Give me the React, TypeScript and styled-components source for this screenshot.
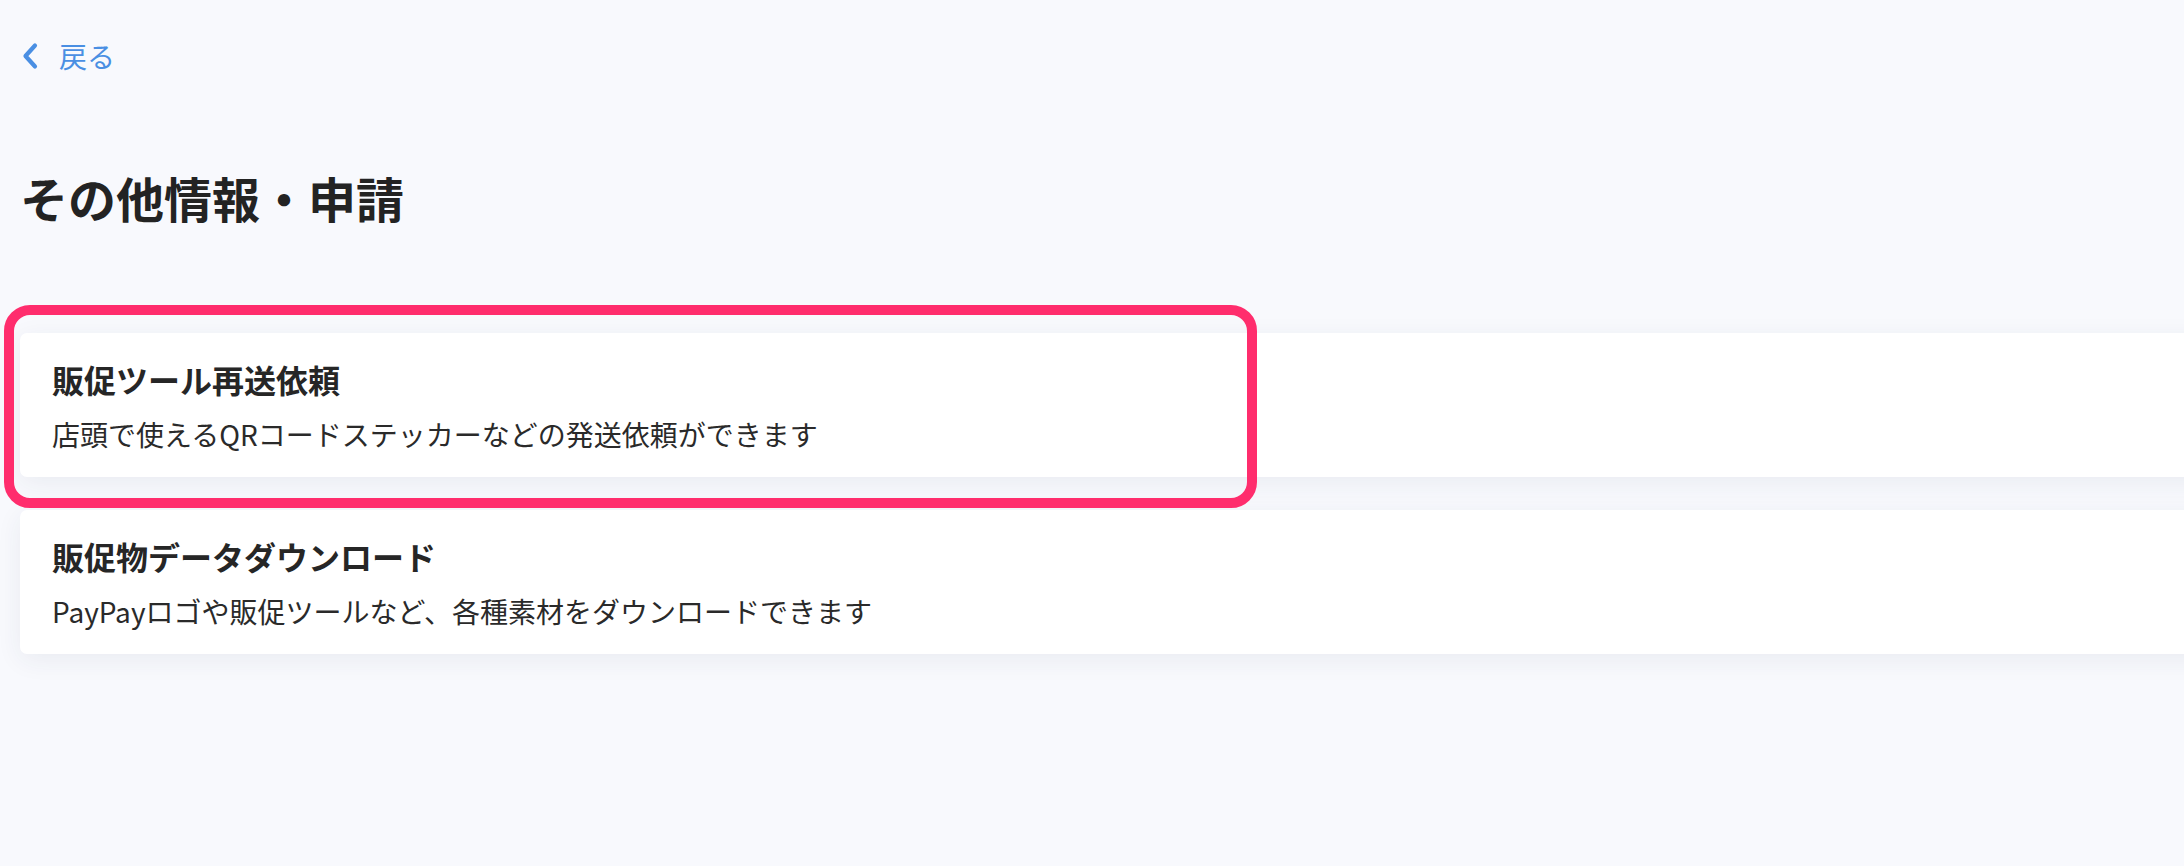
import React from "react";
import styled, { createGlobalStyle } from "styled-components";

const GlobalStyle = createGlobalStyle`
  html, body {
    margin: 0;
    padding: 0;
    background: #f8f9fd;
    overflow-x: hidden;
  }
  body {
    font-family: "Noto Sans CJK JP", "Noto Sans", sans-serif;
    color: #262626;
  }
  * { box-sizing: border-box; }
`;

const Page = styled.main`
  display: flex;
  flex-direction: column;
  padding: 35px 0 0 20px;
  min-height: 866px;
`;

const BackLink = styled.a`
  display: inline-flex;
  align-items: center;
  gap: 20px;
  align-self: flex-start;
  color: #4a8fe3;
  font-size: 28px;
  line-height: 42px;
  text-decoration: none;
  padding-left: 1px;
  cursor: pointer;
`;

const Heading = styled.h1`
  margin: 84px 0 0;
  font-size: 48px;
  line-height: 72px;
  font-weight: 700;
  color: #232323;
  letter-spacing: 0;
`;

const CardList = styled.div`
  display: flex;
  flex-direction: column;
  gap: 33px;
  margin: 100px -40px 0 0;
`;

const Highlight = styled.div`
  position: relative;
`;

const Annotation = styled.div`
  position: absolute;
  left: -16px;
  top: -28px;
  width: 1253px;
  height: 203px;
  border: 10px solid #ff2d6d;
  border-radius: 26px;
  pointer-events: none;
`;

const Card = styled.a`
  display: flex;
  flex-direction: column;
  gap: 10px;
  padding: 22px 32px 22px;
  background: #ffffff;
  border-radius: 7px;
  box-shadow: 0 6px 26px rgba(40, 50, 90, 0.07);
  text-decoration: none;
  color: inherit;
  cursor: pointer;
`;

const CardTitle = styled.div`
  font-size: 32px;
  line-height: 48px;
  font-weight: 700;
  color: #262626;
`;

const CardText = styled.div`
  font-size: 28px;
  line-height: 42px;
  font-weight: 400;
  color: #2a2a2a;
`;

const Chevron = () => (
  <svg width="18" height="28" viewBox="0 0 18 28" aria-hidden="true">
    <polyline
      points="14,3.5 4.5,14 14,24.5"
      fill="none"
      stroke="#4a8fe3"
      strokeWidth="4.2"
      strokeLinecap="round"
      strokeLinejoin="round"
    />
  </svg>
);

const items = [
  {
    title: "販促ツール再送依頼",
    text: "店頭で使えるQRコードステッカーなどの発送依頼ができます",
    highlight: true,
  },
  {
    title: "販促物データダウンロード",
    text: "PayPayロゴや販促ツールなど、各種素材をダウンロードできます",
    highlight: false,
  },
];

export default function App() {
  return (
    <>
      <GlobalStyle />
      <Page>
        <BackLink>
          <Chevron />
          <span>戻る</span>
        </BackLink>
        <Heading>その他情報・申請</Heading>
        <CardList>
          {items.map((item) => {
            const card = (
              <Card>
                <CardTitle>{item.title}</CardTitle>
                <CardText>{item.text}</CardText>
              </Card>
            );
            return item.highlight ? (
              <Highlight key={item.title}>
                {card}
                <Annotation />
              </Highlight>
            ) : (
              <React.Fragment key={item.title}>{card}</React.Fragment>
            );
          })}
        </CardList>
      </Page>
    </>
  );
}
